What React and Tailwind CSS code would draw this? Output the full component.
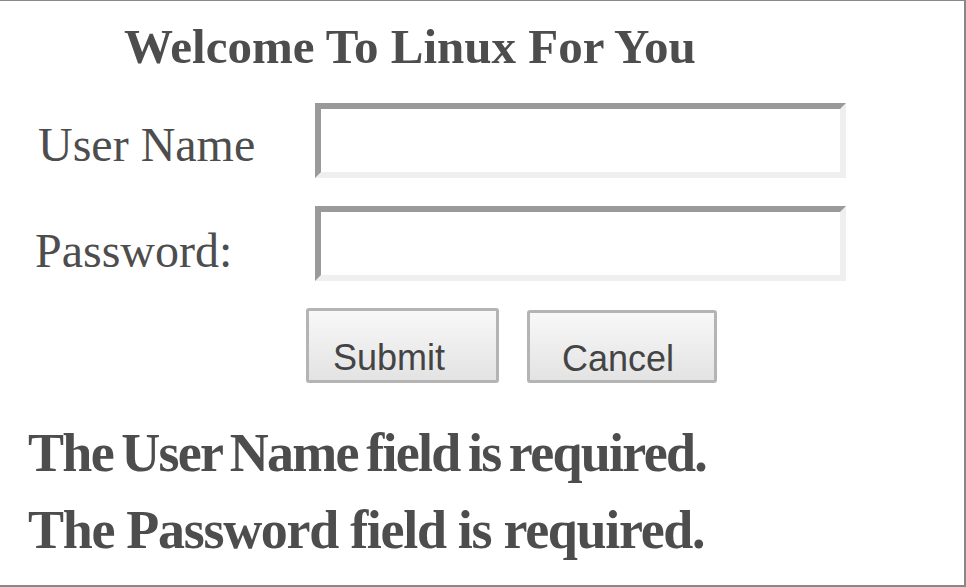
import React from 'react';

const serif = "font-['Liberation_Serif','Times_New_Roman',serif]";
const sans = "font-['Liberation_Sans',Arial,sans-serif]";

const Field = ({ label, labelPad, labelTop, type }) => (
  <div className="flex items-start">
    <label
      className={`${serif} w-[315px] shrink-0 text-[48px] leading-[48px] text-[#4d4d4d]`}
      style={{ paddingLeft: labelPad, paddingTop: labelTop }}
    >
      {label}
    </label>
    <input
      type={type}
      className="h-[75px] w-[531px] border-[6px] border-t-[#9a9a9a] border-l-[#9a9a9a] border-b-[#efefef] border-r-[#efefef] bg-white outline-none"
    />
  </div>
);

const App = () => {
  return (
    <div className="w-[966px] h-[587px] bg-white border-t border-b-2 border-r-2 border-[#888888] overflow-hidden">
      <h1 className={`${serif} pl-[124px] pt-[22px] text-[49px] leading-[48px] font-bold text-[#4d4d4d]`}>
        Welcome To Linux For You
      </h1>

      <div className="mt-[32px] flex flex-col gap-[28px]">
        <Field label="User Name" labelPad="38px" labelTop="18px" type="text" />
        <Field label="Password:" labelPad="35px" labelTop="21px" type="password" />
      </div>

      <div className="mt-[27px] pl-[306px] flex items-start gap-[28px]">
        <button className={`${sans} block h-[75px] w-[193px] rounded-[3px] border-[3px] border-[#b4b4b4] bg-gradient-to-b from-[#f8f8f8] to-[#e3e3e3] pl-[24px] pt-[24px] text-left text-[36px] leading-[36px] text-[#444444]`}>
          Submit
        </button>
        <button className={`${sans} mt-[2px] block h-[73px] w-[190px] rounded-[3px] border-[3px] border-[#b4b4b4] bg-gradient-to-b from-[#f8f8f8] to-[#e3e3e3] pl-[32px] pt-[25px] text-left text-[36px] leading-[36px] text-[#444444]`}>
          Cancel
        </button>
      </div>

      <div className={`${serif} mt-[43px] pl-[28px] flex flex-col gap-[23px] text-[54px] leading-[54px] font-bold text-[#4d4d4d]`}>
        <p className="tracking-[-1.7px] [word-spacing:-3.5px]">The User Name field is required.</p>
        <p className="tracking-[-1.3px]">The Password field is required.</p>
      </div>
    </div>
  );
};

export default App;
